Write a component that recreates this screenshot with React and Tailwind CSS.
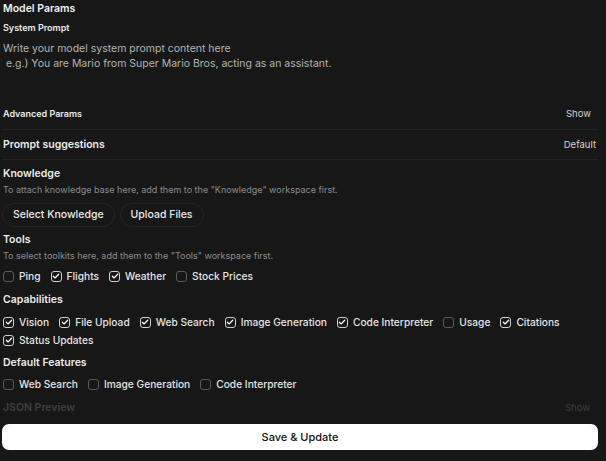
import { useState } from 'react';

function Check({ label, checked: initial }) {
  const [checked, setChecked] = useState(initial);
  return (
    <button
      type="button"
      onClick={() => setChecked(!checked)}
      className="flex items-center gap-[5px] h-[16px]"
    >
      <span
        className={`flex items-center justify-center w-[11px] h-[11px] rounded-[3px] border ${
          checked ? 'border-[#d0d0d0]' : 'border-[#5a5a5a]'
        }`}
      >
        {checked && (
          <svg viewBox="0 0 12 12" className="w-[8px] h-[8px]" fill="none">
            <path d="M2 6.3l2.6 2.6L10 3.4" stroke="#ffffff" strokeWidth="1.9" strokeLinecap="round" strokeLinejoin="round" />
          </svg>
        )}
      </span>
      <span className="text-[10.2px] leading-[16px] font-medium text-[#e5e5e5]">{label}</span>
    </button>
  );
}

function Heading({ children, className = '' }) {
  return (
    <div className={`text-[10.5px] leading-[16px] font-semibold text-[#ececec] ${className}`}>{children}</div>
  );
}

export default function App() {
  const tools = [
    ['Ping', false],
    ['Flights', true],
    ['Weather', true],
    ['Stock Prices', false],
  ];
  const capabilities = [
    ['Vision', true],
    ['File Upload', true],
    ['Web Search', true],
    ['Image Generation', true],
    ['Code Interpreter', true],
    ['Usage', false],
    ['Citations', true],
    ['Status Updates', true],
  ];
  const features = [
    ['Web Search', false],
    ['Image Generation', false],
    ['Code Interpreter', false],
  ];

  return (
    <div
      className="w-[606px] h-[461px] overflow-hidden bg-[#171717] pt-[1px] pl-[2px] pr-[8px] flex flex-col"
      style={{ fontFamily: 'Inter, "Noto Sans", sans-serif' }}
    >
      <div className="pl-[1px] text-[10.5px] leading-[16px] font-semibold text-[#f0f0f0]">Model Params</div>
      <div className="pl-[1px] mt-[4px] text-[9px] leading-[14px] font-semibold text-[#ececec]">System Prompt</div>
      <div className="pl-[1px] mt-[6px] h-[64px] text-[10.5px] leading-[15px] text-[#b4b4b4]">
        <div>Write your model system prompt content here</div>
        <div>&nbsp;e.g.) You are Mario from Super Mario Bros, acting as an assistant.</div>
      </div>
      <div className="pl-[1px] mt-[2px] flex justify-between items-center h-[14px]">
        <span className="text-[9px] leading-[14px] font-semibold text-[#ececec]">Advanced Params</span>
        <span className="text-[9.5px] leading-[14px] text-[#d4d4d4] pr-[7px]">Show</span>
      </div>
      <div className="mt-[8px] h-[1px] bg-[#222222]" />
      <div className="pl-[1px] mt-[7px] flex justify-between items-center h-[16px]">
        <span className="text-[10.5px] leading-[16px] font-semibold text-[#ececec]">Prompt suggestions</span>
        <span className="text-[9.5px] leading-[14px] text-[#d4d4d4] pr-[2px]">Default</span>
      </div>
      <div className="mt-[6px] h-[1px] bg-[#222222]" />

      <Heading className="pl-[1px] mt-[6px]">Knowledge</Heading>
      <div className="pl-[1px] mt-[2px] text-[9px] leading-[12px] text-[#8c8c8c]">
        To attach knowledge base here, add them to the "Knowledge" workspace first.
      </div>
      <div className="mt-[7px] flex gap-[5px]">
        <button type="button" className="h-[24px] px-[10px] rounded-full border border-[#242424] text-[10.5px] font-medium text-[#ececec]">
          Select Knowledge
        </button>
        <button type="button" className="h-[24px] px-[10px] rounded-full border border-[#242424] text-[10.5px] font-medium text-[#ececec]">
          Upload Files
        </button>
      </div>

      <Heading className="pl-[1px] mt-[5px]">Tools</Heading>
      <div className="pl-[1px] mt-[2px] text-[9px] leading-[12px] text-[#8c8c8c]">
        To select toolkits here, add them to the "Tools" workspace first.
      </div>
      <div className="pl-[1px] mt-[6px] flex flex-wrap gap-x-[10px]">
        {tools.map(([l, c]) => (
          <Check key={l} label={l} checked={c} />
        ))}
      </div>

      <Heading className="pl-[1px] mt-[8px]">Capabilities</Heading>
      <div className="pl-[1px] mt-[6px] flex flex-wrap gap-x-[10px] gap-y-[2px]">
        {capabilities.map(([l, c]) => (
          <Check key={l} label={l} checked={c} />
        ))}
      </div>

      <Heading className="pl-[1px] mt-[7px]">Default Features</Heading>
      <div className="pl-[1px] mt-[5px] flex flex-wrap gap-x-[10px]">
        {features.map(([l, c]) => (
          <Check key={l} label={l} checked={c} />
        ))}
      </div>

      <div className="pl-[1px] mt-[8px] flex justify-between items-center h-[16px]">
        <span className="text-[10.5px] leading-[16px] font-semibold text-[#3f3f3f]">JSON Preview</span>
        <span className="text-[9.5px] leading-[14px] text-[#3f3f3f] pr-[8px]">Show</span>
      </div>

      <button
        type="button"
        className="mt-[8px] h-[26px] w-full rounded-[7px] bg-white text-[11px] font-medium text-[#111111]"
      >
        Save &amp; Update
      </button>
    </div>
  );
}
